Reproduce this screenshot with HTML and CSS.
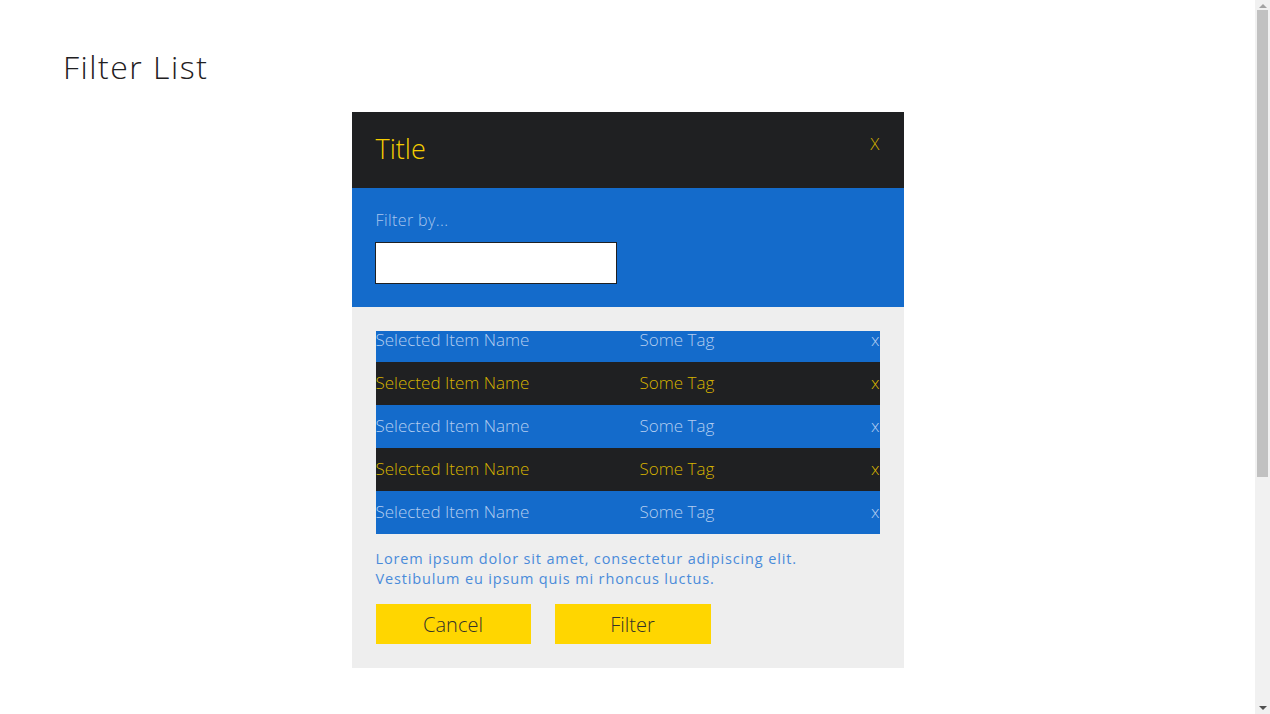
FILE: index.html
```html
<!DOCTYPE html>
<html lang="en">
<head>
<meta charset="utf-8">
<title>Filter List</title>
<link rel="stylesheet" href="styles.css">
</head>
<body>
<div class="page">
  <h1 class="page-title">Filter List</h1>
  <div class="modal">
    <div class="modal-header">
      <h2 class="modal-title">Title</h2>
      <span class="modal-close">X</span>
    </div>
    <div class="modal-filter">
      <label class="filter-label" for="filter">Filter by...</label>
      <input class="filter-input" id="filter" type="text">
    </div>
    <div class="modal-body">
      <div class="list">
        <div class="row row-blue"><span class="cell-name">Selected Item Name</span><span class="cell-tag">Some Tag</span><span class="cell-x">x</span></div>
        <div class="row row-dark"><span class="cell-name">Selected Item Name</span><span class="cell-tag">Some Tag</span><span class="cell-x">x</span></div>
        <div class="row row-blue"><span class="cell-name">Selected Item Name</span><span class="cell-tag">Some Tag</span><span class="cell-x">x</span></div>
        <div class="row row-dark"><span class="cell-name">Selected Item Name</span><span class="cell-tag">Some Tag</span><span class="cell-x">x</span></div>
        <div class="row row-blue"><span class="cell-name">Selected Item Name</span><span class="cell-tag">Some Tag</span><span class="cell-x">x</span></div>
      </div>
      <p class="note">Lorem ipsum dolor sit amet, consectetur adipiscing elit.<br>Vestibulum eu ipsum quis mi rhoncus luctus.</p>
      <div class="actions">
        <button class="btn" type="button">Cancel</button>
        <button class="btn" type="button">Filter</button>
      </div>
    </div>
  </div>
</div>
<div class="scrollbar" aria-hidden="true">
  <span class="scroll-arrow scroll-up"></span>
  <span class="scroll-thumb"></span>
  <span class="scroll-arrow scroll-down"></span>
</div>
</body>
</html>
```

FILE: styles.css
```css
html, body {
  margin: 0;
  padding: 0;
  background: #ffffff;
}

body {
  font-family: "Open Sans", Lato, sans-serif;
  font-weight: 300;
  color: #1f2022;
  padding-right: 15px;
}

.page {
  padding: 47px 0 100px;
}

.page-title {
  margin: 0 0 25px 63px;
  font-size: 32px;
  line-height: 40px;
  letter-spacing: 1.5px;
  font-weight: 300;
  color: #1f2022;
}

.modal {
  width: 552px;
  margin: 0 auto;
}

.modal-header {
  background: #1f2022;
  padding: 21px 24px 24px;
  display: flex;
  justify-content: space-between;
  align-items: flex-start;
}

.modal-title {
  margin: 0;
  font-size: 27px;
  line-height: 31px;
  font-weight: 300;
  color: #f5cd00;
}

.modal-close {
  margin-top: 1px;
  font-size: 17px;
  line-height: 20px;
  color: #cfae00;
}

.modal-filter {
  background: #146bcb;
  padding: 23px;
  display: flex;
  flex-direction: column;
  align-items: flex-start;
}

.filter-label {
  font-size: 16px;
  line-height: 19px;
  letter-spacing: 0.4px;
  color: #a9c6ee;
  padding-left: 1px;
}

.filter-input {
  margin-top: 12px;
  width: 242px;
  height: 42px;
  box-sizing: border-box;
  border: 1px solid #1f2022;
  background: #ffffff;
  padding: 0 8px;
  font: inherit;
}

.modal-body {
  background: #eeeeee;
  padding: 24px;
}

.list {
  display: flex;
  flex-direction: column;
}

.row {
  display: grid;
  grid-template-columns: 264px 1fr auto;
  font-size: 17px;
  line-height: 18px;
  padding: 0 0 13px;
}

.row + .row {
  padding: 12px 0 13px;
}

.row-blue {
  background: #146bcb;
  color: #b3cdf0;
}

.row-dark {
  background: #1f2022;
  color: #d6b300;
}

.note {
  margin: 15px 0 0;
  font-size: 14.5px;
  font-weight: 400;
  line-height: 20px;
  letter-spacing: 0.85px;
  color: #4a8bda;
}

.actions {
  margin-top: 15px;
  display: flex;
  gap: 24px;
}

.btn {
  width: 155px;
  height: 40px;
  border: 0;
  background: #ffd600;
  color: #33322a;
  font-family: inherit;
  font-weight: 300;
  font-size: 20px;
  padding: 0;
}

.btn + .btn {
  width: 156px;
}

.scrollbar {
  position: fixed;
  top: 0;
  right: 0;
  bottom: 0;
  width: 15px;
  background: #f1f1f1;
  display: flex;
  flex-direction: column;
  align-items: center;
}

.scroll-arrow {
  width: 0;
  height: 0;
  border-left: 4px solid transparent;
  border-right: 4px solid transparent;
}

.scroll-up {
  margin-top: 4px;
  border-bottom: 4px solid #a3a3a3;
}

.scroll-down {
  margin-top: auto;
  margin-bottom: 4px;
  border-top: 4px solid #505050;
}

.scroll-thumb {
  margin-top: 2px;
  width: 11px;
  height: 467px;
  background: #c1c1c1;
}
```
